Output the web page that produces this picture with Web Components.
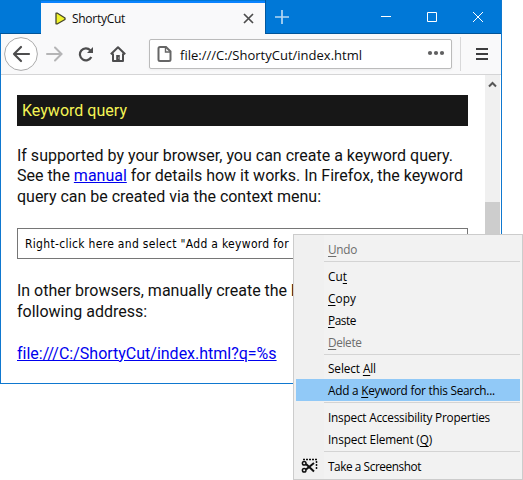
<!DOCTYPE html>
<html lang="en"><head><meta charset="utf-8"><title>ShortyCut</title>
<style>
html,body{margin:0;background:#fff;width:523px;height:480px;overflow:hidden}
body{position:relative}
context-menu{position:absolute;left:293px;top:234px}
</style></head><body>
<browser-window>
 <tab-strip slot="tabs"><fit-text w="53">ShortyCut</fit-text></tab-strip>
 <tool-bar slot="tools"><fit-text w="182">file:///C:/ShortyCut/index.html</fit-text></tool-bar>
 <help-page></help-page>
</browser-window>
<context-menu>
 <menu-item disabled><fit-text w="29"><u>U</u>ndo</fit-text></menu-item>
 <menu-rule></menu-rule>
 <menu-item><fit-text w="19">Cu<u>t</u></fit-text></menu-item>
 <menu-item><fit-text w="28"><u>C</u>opy</fit-text></menu-item>
 <menu-item><fit-text w="28"><u>P</u>aste</fit-text></menu-item>
 <menu-item disabled><fit-text w="33.5"><u>D</u>elete</fit-text></menu-item>
 <menu-rule tight></menu-rule>
 <menu-item><fit-text w="48">Select <u>A</u>ll</fit-text></menu-item>
 <menu-item active><fit-text w="167">Add a <u>K</u>eyword for this Search...</fit-text></menu-item>
 <menu-rule></menu-rule>
 <menu-item><fit-text w="162">Inspect Accessibility Properties</fit-text></menu-item>
 <menu-item><fit-text w="104">Inspect Element (<u>Q</u>)</fit-text></menu-item>
 <menu-rule></menu-rule>
 <menu-item><svg slot="icon" width="17" height="16" viewBox="0 0 17 16" fill="none" stroke="#111"><path d="M2 1.5H16M15.5 3v9" stroke-width="1.5" stroke-dasharray="2 1"/><path d="M5 6l8 7.5M5 11.5L13 5" stroke-width="2"/><circle cx="3.2" cy="5.2" r="1.8" stroke-width="1.5"/><circle cx="3.2" cy="12.3" r="1.8" stroke-width="1.5"/></svg><fit-text w="93">Take a Screenshot</fit-text></menu-item>
</context-menu>
<script>
function define(name, html, setup){
  customElements.define(name, class extends HTMLElement{
    constructor(){super();this.attachShadow({mode:'open'}).innerHTML=html}
    connectedCallback(){if(setup)setup(this)}
  });
}
define('browser-window',`<style>
:host{display:flex;flex-direction:column;box-sizing:border-box;width:502px;height:384px;border:1px solid #0f78cf;border-top:0;background:#fff}
main{flex:1;min-height:0;display:flex;padding-right:1px}
::slotted(help-page){flex:1}
aside{width:15px;background:#f0f0f0;display:flex;flex-direction:column}
svg{display:block;margin:5px auto 0}i{margin-top:113px;background:#cdcdcd;flex:1}
</style><slot name="tabs"></slot><slot name="tools"></slot><main><slot></slot><aside><svg width="9" height="9" fill="none" stroke="#555" stroke-width="2"><path d="M1 6.5L4.500 3L8 6.500"/></svg><i></i></aside></main>`);
define('tab-strip',`<style>
:host{display:flex;height:34px;background:#0078d7;margin:0 0 0 -1px;font:12px "Open Sans","Noto Sans",sans-serif;color:#0c0c0d;box-shadow:inset 0 -1px #005499}
.tab{margin:1px 0 0 41px;width:224px;box-sizing:border-box;border-top:2px solid #0a84ff;background:#f9f9fa;display:flex;align-items:center;padding:0 11px 1px 13px;gap:5px}
.tab slot{display:block;padding-top:1px}
.tab svg:first-child{margin-top:1px}
.tab svg:last-child{margin-left:auto}
.bar{flex:1;display:flex;align-items:center;padding:0 18px 0 11px;border-left:1px solid #0058a0}
.bar svg:nth-child(2){margin-left:auto}.bar svg{margin-bottom:1px}
</style><div class="tab"><svg width="13" height="13"><path d="M2 1.200v10.600h1.500L11 7.500v-1.500L3.500 1.200z" fill="#f1f32b" stroke="#45452c" stroke-width="1.300" stroke-linejoin="round"/></svg><slot></slot><svg width="11" height="11"><path d="M1 1l9 9M10 1l-9 9" stroke="#4c4c4c" stroke-width="1.700"/></svg></div>
<div class="bar"><svg width="14" height="14" style="margin-left:-2px"><path d="M7 0v14M0 7h14" stroke="#b5d7f3" stroke-width="1.700"/></svg>
<svg width="10" height="10" shape-rendering="crispEdges"><path d="M0 4.500h10" stroke="#fff"/></svg>
<svg width="10" height="10" style="margin-left:36px"><path d="M.5.5h9v9h-9z" fill="none" stroke="#fff"/></svg>
<svg width="10" height="10" style="margin-left:36px"><path d="M0 0l10 10M10 0L0 10" stroke="#fff"/></svg></div>`);
define('tool-bar',`<style>
:host{box-sizing:border-box;height:41px;background:#f9f9fa;border-bottom:1px solid #d5d5d6;display:flex;align-items:center;padding:0 12px 0 3px;font:13px "Open Sans","Noto Sans",sans-serif;color:#0c0c0d}
svg{flex:none;display:block}.field{margin-left:23px;width:303px;flex:none;height:30px;box-sizing:border-box;border:1px solid #bbb;border-radius:2px;background:#fff;display:flex;align-items:center;padding:0 6px 0 7px;box-shadow:0 1px 3px #0000000d}
.field slot{display:block;padding-top:2px}::slotted(*){margin-left:8px}.dots{margin-left:auto;margin-top:-2px}
i{width:1px;height:34px;background:#d8d8d9;margin:0 15px 0 8px}
</style><svg width="34" height="34" fill="none"><circle cx="17" cy="17" r="16.400" fill="#fff" stroke="#aaa"/><path d="M25 17H10M17 10l-7 7 7 7" stroke="#4d4d4e" stroke-width="2.200" stroke-linejoin="round" stroke-linecap="round"/></svg>
<svg width="17" height="16" style="margin-left:8px" fill="none" stroke="#b5b5b6" stroke-width="2"><path d="M1 8h14M9 1.500L15.500 8 9 14.500" stroke-linecap="round"/></svg>
<svg width="16" height="16" style="margin-left:15px" fill="none" stroke="#4d4d4e" stroke-width="2.200"><path d="M12.300 4.200a6 6 0 1 0 1 6.800"/><path d="M15 1v6H9z" fill="#4d4d4e" stroke="none"/></svg>
<svg width="16" height="16" style="margin-left:16px" fill="none" stroke="#4d4d4e" stroke-width="2"><path d="M.8 8.300L8 1.200l7.200 7.100M3 7.500V15h10V7.500" stroke-linejoin="round"/><path d="M6.200 14.500V9h3.600v5.500" fill="#4d4d4e" stroke="none"/><path d="M8.700 11.500v1" stroke="#ccc" stroke-width="1"/></svg>
<div class="field"><svg width="15" height="16" fill="none" stroke="#666" stroke-width="2"><path d="M3 1h6l4.500 4.500V13.500q0 1.500-1.500 1.500H3q-1.500 0-1.500-1.500v-11Q1.500 1 3 1z"/><path d="M8.500 1.500V6h4.500" stroke-width="1.400"/></svg><slot></slot><svg class="dots" width="18" height="6" fill="#606061"><circle cx="3" cy="3" r="2.100"/><circle cx="9" cy="3" r="2.100"/><circle cx="15" cy="3" r="2.100"/></svg></div><i></i>
<svg width="12" height="12" stroke="#3d3d3e" stroke-width="2"><path d="M0 1h12M0 6h12M0 11h12"/></svg>`);
define('help-page',`<style>
:host{display:block;padding:20px 17px 0 16px;font:16px/20.800px Roboto,sans-serif;color:#111}
h2{margin:0;height:31px;background:#171717;color:#f4f455;font:16px/31px Roboto,sans-serif;padding-left:5px}
p{margin:0;white-space:nowrap}fit-text{display:block}a{color:#0000ee;text-decoration:underline}
.one{margin-top:19.600px}.two{margin-top:22px}.three{margin-top:21px}
.input{margin-top:20px;height:31px;box-sizing:border-box;border:1px solid #767676;padding:1px 0 0 7px;display:flex;align-items:center;font:12px/20px "DejaVu Sans Condensed","DejaVu Sans",sans-serif;font-stretch:condensed;color:#000}
</style><h2><fit-text w="105">Keyword query</fit-text></h2>
<p class="one"><fit-text w="436">If supported by your browser, you can create a keyword query.</fit-text><fit-text w="446">See the <a>manual</a> for details how it works. In Firefox, the keyword</fit-text><fit-text w="304">query can be created via the context menu:</fit-text></p>
<div class="input"><fit-text w="264">Right-click here and select "Add a keyword for</fit-text></div>
<p class="two"><fit-text w="283">In other browsers, manually create the b</fit-text><fit-text w="130">following address:</fit-text></p>
<p class="three"><fit-text w="259"><a>file:///C:/ShortyCut/index.html?q=%s</a></fit-text></p>`);
define('context-menu',`<style>
:host{display:flex;flex-direction:column;box-sizing:border-box;width:230px;height:246px;border:1px solid #ccc;padding:3px 2px 2px;background:linear-gradient(90deg,#f0f0f0 30px,#f2f2f2 30px);font:11.800px/22px "Open Sans","Noto Sans",sans-serif;color:#000}
</style><slot></slot>`);
define('menu-item',`<style>
:host{display:flex;height:22px;align-items:center}
:host([disabled]){color:#6d6d6d}:host([active]){background:#91c9f7}
.icon{width:27px;padding-left:5px;box-sizing:border-box;margin-right:5px;display:flex}
</style><span class="icon"><slot name="icon"></slot></span><slot></slot>`);
define('menu-rule',`<style>:host{display:block;box-sizing:border-box;height:5px;margin-left:28px;padding-top:1px}:host([tight]){height:4px}i{display:block;height:1px;background:#d4d4d4}</style><i></i>`);
/* Spreads a single line of text over the width given in "w". */
define('fit-text',`<style>:host{display:block;white-space:nowrap}span{display:inline-block}::slotted(u){text-underline-offset:2px;text-decoration-thickness:1px}</style><span><slot></slot></span>`,el=>{
  const s=el.shadowRoot.querySelector('span'),n=el.textContent.length;
  s.style.letterSpacing=((+el.getAttribute('w')-s.getBoundingClientRect().width)/n)+'px';
});
</script></body></html>
